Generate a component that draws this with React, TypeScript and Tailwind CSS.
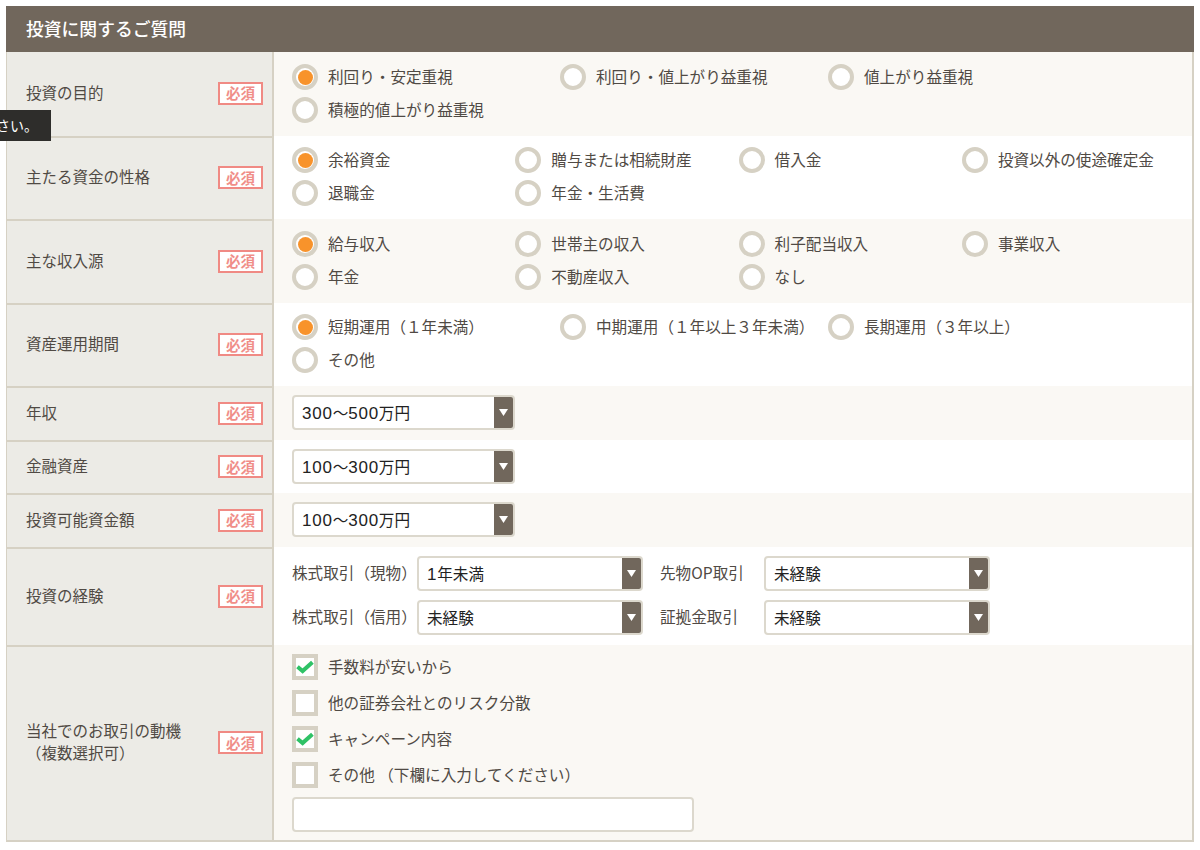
const FONT = "font-['Noto_Sans_CJK_JP','Noto_Sans',sans-serif]";

function Required() {
  return (
    <span className="mb-px flex h-[23px] w-[45px] shrink-0 items-center justify-center border-2 border-[#f08a84] bg-white text-[14.5px] leading-none font-bold text-[#f08e89]">
      必須
    </span>
  );
}

function Row({
  label,
  height,
  alt,
  first,
  children,
}: {
  label: React.ReactNode;
  height: string;
  alt?: boolean;
  first?: boolean;
  children: React.ReactNode;
}) {
  return (
    <div className={`flex ${height}`}>
      <div
        className={`flex w-[267px] shrink-0 items-center justify-between border-r-2 border-[#d6d1c4] bg-[#ecebe6] pr-[9px] pl-[19px] ${first ? "" : "border-t-2"}`}
      >
        <div className="mb-[4px] text-[15.5px] leading-[22px] text-[#504a44]">{label}</div>
        <Required />
      </div>
      <div className={`min-w-0 flex-1 pl-[18px] ${alt ? "bg-[#faf8f4]" : "bg-white"}`}>{children}</div>
    </div>
  );
}

function Radio({ label, checked }: { label: string; checked?: boolean }) {
  return (
    <div className="flex h-[26px] items-center gap-[10px] whitespace-nowrap">
      <span className="flex h-[26px] w-[26px] shrink-0 items-center justify-center rounded-full border-4 border-[#d6d1c4] bg-white">
        {checked && <span className="h-[15px] w-[15px] rounded-full bg-[#f8932b]" />}
      </span>
      <span className="text-[15.6px] text-[#504a44]">{label}</span>
    </div>
  );
}

function Checkbox({ label, checked }: { label: string; checked?: boolean }) {
  return (
    <div className="flex h-[26px] items-center gap-[10px] whitespace-nowrap">
      <span className="flex h-[26px] w-[26px] shrink-0 items-center justify-center border-4 border-[#d6d1c4] bg-white">
        {checked && (
          <svg width="18" height="14" viewBox="0 0 18 14" aria-hidden>
            <path d="M1.5 6.8L6.6 11L16.4 2.2" stroke="#2fc266" strokeWidth="4" fill="none" />
          </svg>
        )}
      </span>
      <span className="text-[15.6px] text-[#504a44]">{label}</span>
    </div>
  );
}

function Num({ children }: { children: string }) {
  return <span className="font-['Liberation_Sans',sans-serif] text-[17px] tracking-[0.75px]">{children}</span>;
}

function Select({ value, width }: { value: React.ReactNode; width: string }) {
  return (
    <div className={`flex h-[35px] items-stretch overflow-hidden rounded-[4px] border-2 border-[#dcd8cd] bg-white ${width}`}>
      <span className="flex-1 pl-[8px] text-[15.6px] leading-[31px] text-[#222]">{value}</span>
      <span className="flex w-[19px] items-center justify-center bg-[#71675c]">
        <svg width="9" height="7" viewBox="0 0 9 7" aria-hidden>
          <path d="M0 0H9L4.5 7Z" fill="#fff" />
        </svg>
      </span>
    </div>
  );
}

export default function App() {
  return (
    <div className={`relative h-[850px] w-[1200px] overflow-hidden bg-white px-[6px] pt-[6px] ${FONT}`}>
      <div className="border-r-2 border-b-2 border-l border-[#d6d1c4]">
        <div className="-mr-[2px] -ml-px flex h-[46px] items-center bg-[#71675c] pb-[2px] pl-[20px] text-[17.8px] font-medium text-white">
          投資に関するご質問
        </div>
        <Row label="投資の目的" height="h-[83.5px]" alt first>
          <div className="grid grid-cols-[268px_268px_268px] gap-y-[7px] pt-[12px]">
            <Radio label="利回り・安定重視" checked />
            <Radio label="利回り・値上がり益重視" />
            <Radio label="値上がり益重視" />
            <Radio label="積極的値上がり益重視" />
          </div>
        </Row>
        <Row label="主たる資金の性格" height="h-[83.5px]">
          <div className="grid grid-cols-[223.3px_223.3px_223.3px_223.3px] gap-y-[7px] pt-[11.5px]">
            <Radio label="余裕資金" checked />
            <Radio label="贈与または相続財産" />
            <Radio label="借入金" />
            <Radio label="投資以外の使途確定金" />
            <Radio label="退職金" />
            <Radio label="年金・生活費" />
          </div>
        </Row>
        <Row label="主な収入源" height="h-[83.5px]" alt>
          <div className="grid grid-cols-[223.3px_223.3px_223.3px_223.3px] gap-y-[7px] pt-[12px]">
            <Radio label="給与収入" checked />
            <Radio label="世帯主の収入" />
            <Radio label="利子配当収入" />
            <Radio label="事業収入" />
            <Radio label="年金" />
            <Radio label="不動産収入" />
            <Radio label="なし" />
          </div>
        </Row>
        <Row label="資産運用期間" height="h-[83.5px]">
          <div className="grid grid-cols-[268px_268px_268px] gap-y-[7px] pt-[11.5px]">
            <Radio label="短期運用（１年未満）" checked />
            <Radio label="中期運用（１年以上３年未満）" />
            <Radio label="長期運用（３年以上）" />
            <Radio label="その他" />
          </div>
        </Row>
        <Row label="年収" height="h-[53.5px]" alt>
          <div className="pt-[9px]">
            <Select value={<><Num>300</Num>〜<Num>500</Num>万円</>} width="w-[223px]" />
          </div>
        </Row>
        <Row label="金融資産" height="h-[53.5px]">
          <div className="pt-[9px]">
            <Select value={<><Num>100</Num>〜<Num>300</Num>万円</>} width="w-[223px]" />
          </div>
        </Row>
        <Row label="投資可能資金額" height="h-[53.5px]" alt>
          <div className="pt-[9px]">
            <Select value={<><Num>100</Num>〜<Num>300</Num>万円</>} width="w-[223px]" />
          </div>
        </Row>
        <Row label="投資の経験" height="h-[98px]">
          <div className="grid grid-cols-[125px_243px_104px_226px] items-center gap-y-[9px] pt-[9px] text-[15.6px] text-[#504a44]">
            <span className="whitespace-nowrap">株式取引（現物）</span>
            <Select value={<><Num>1</Num>年未満</>} width="w-[226px]" />
            <span>先物OP取引</span>
            <Select value="未経験" width="w-[226px]" />
            <span className="whitespace-nowrap">株式取引（信用）</span>
            <Select value="未経験" width="w-[226px]" />
            <span>証拠金取引</span>
            <Select value="未経験" width="w-[226px]" />
          </div>
        </Row>
        <Row
          label={
            <>
              当社でのお取引の動機
              <br />
              （複数選択可）
            </>
          }
          height="h-[195.5px]"
          alt
        >
          <div className="flex flex-col gap-[10px] pt-[9.5px]">
            <Checkbox label="手数料が安いから" checked />
            <Checkbox label="他の証券会社とのリスク分散" />
            <Checkbox label="キャンペーン内容" checked />
            <Checkbox label="その他 （下欄に入力してください）" />
          </div>
          <div className="mt-[9px] h-[35px] w-[402px] rounded-[4px] border-2 border-[#dcd8cd] bg-white" />
        </Row>
      </div>
      <div className="absolute top-[110px] left-0 flex h-[31px] w-[51px] items-center justify-end overflow-hidden bg-[#2e2d2b] pr-[13px] text-[14px] whitespace-nowrap text-white">
        選択してください。
      </div>
    </div>
  );
}
